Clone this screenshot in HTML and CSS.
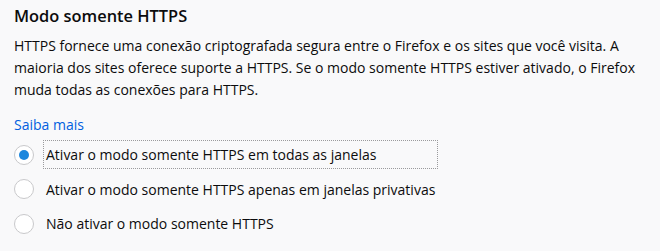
FILE: index.html
```html
<!DOCTYPE html>
<html lang="pt-BR">
<head>
<meta charset="utf-8">
<link rel="stylesheet" href="styles.css">
</head>
<body>
<section class="pane">
  <h2 class="title">Modo somente HTTPS</h2>
  <p class="desc">HTTPS fornece uma conexão criptografada segura entre o Firefox e os sites que você visita. A maioria dos sites oferece suporte a HTTPS. Se o modo somente HTTPS estiver ativado, o Firefox muda todas as conexões para HTTPS.</p>
  <a class="learn" href="#">Saiba mais</a>
  <div class="group" role="radiogroup">
    <div class="row">
      <span class="radio checked"></span>
      <span class="label focused">Ativar o modo somente HTTPS em todas as janelas</span>
    </div>
    <div class="row">
      <span class="radio"></span>
      <span class="label">Ativar o modo somente HTTPS apenas em janelas privativas</span>
    </div>
    <div class="row">
      <span class="radio"></span>
      <span class="label">Não ativar o modo somente HTTPS</span>
    </div>
  </div>
</section>
</body>
</html>
```
FILE: styles.css
```css
html, body {
  margin: 0;
  background: #f9f9fa;
}
body {
  font-family: "Open Sans", "Noto Sans", sans-serif;
  color: #0c0c0d;
}
.pane {
  padding: 5px 14px 0 14px;
}
.title {
  margin: 0;
  font-size: 16.4px;
  font-weight: 600;
  line-height: 22px;
}
.desc {
  margin: 8px 0 0 0;
  font-size: 14px;
  line-height: 22px;
  width: 630px;
}
.learn {
  display: block;
  margin-top: 13px;
  font-size: 14px;
  line-height: 22px;
  color: #0060df;
  text-decoration: none;
  width: max-content;
}
.group {
  display: inline-flex;
  flex-direction: column;
  margin-top: 1.5px;
}
.row {
  display: flex;
  align-items: center;
  padding: 2.75px 0;
}
.radio {
  flex: none;
  width: 18px;
  height: 18px;
  border: 1px solid #c9c9cb;
  border-radius: 50%;
  background: #fff;
  margin-right: 9px;
  display: flex;
  align-items: center;
  justify-content: center;
}
.radio.checked::after {
  content: "";
  width: 10px;
  height: 10px;
  border-radius: 50%;
  background: #1a86dd;
}
.label {
  flex: 1;
  font-size: 14px;
  line-height: 21px;
  padding: 3px 2px;
  border: 1px dotted transparent;
  white-space: nowrap;
}
.label.focused {
  border-color: #9a9a9c;
}
```
